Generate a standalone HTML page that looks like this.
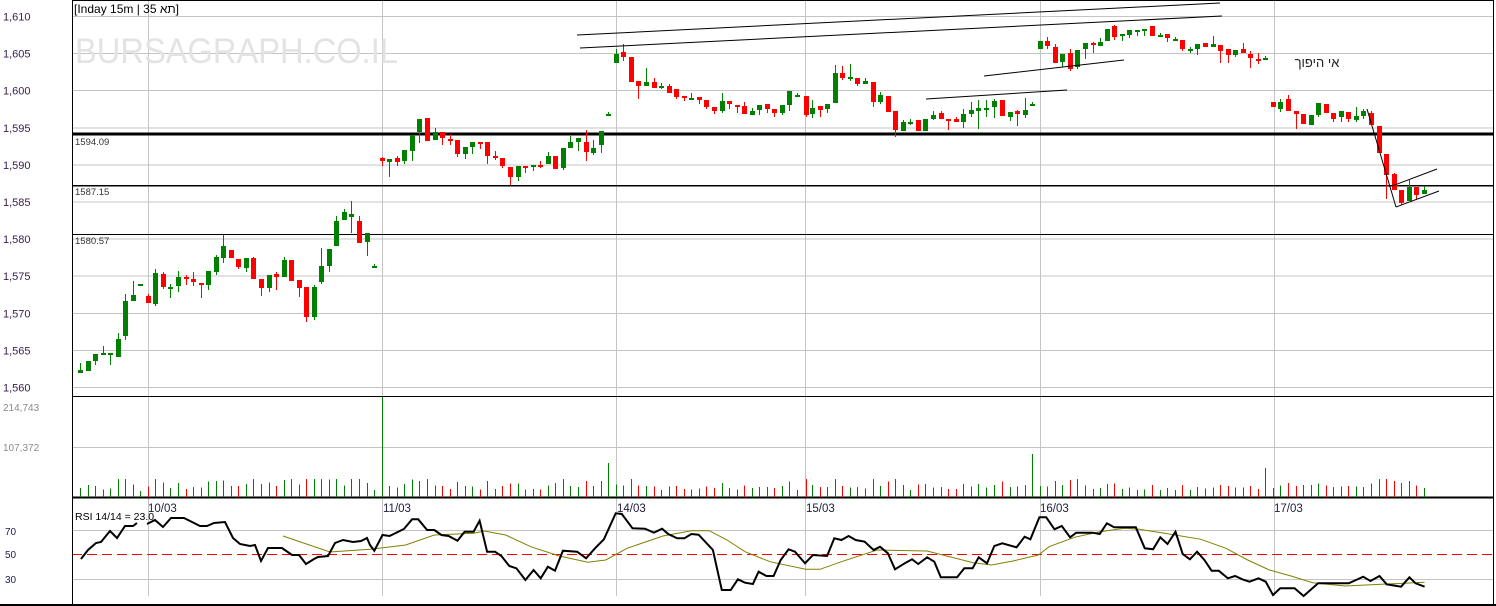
<!DOCTYPE html>
<html><head><meta charset="utf-8">
<style>
html,body{margin:0;padding:0;background:#fff;}
body{width:1496px;height:606px;overflow:hidden;}
svg{display:block;font-family:"Liberation Sans","Noto Sans CJK JP",sans-serif;}
</style></head>
<body>
<svg id="c" width="1496" height="606" xmlns="http://www.w3.org/2000/svg">
<rect width="1496" height="606" fill="#fff"/>
<g id="grid" stroke="#c4c4c4" stroke-width="1" shape-rendering="crispEdges"></g>
<text x="75" y="63" font-size="35" fill="#e3e3e3" textLength="323" lengthAdjust="spacingAndGlyphs">BURSAGRAPH.CO.IL</text>
<g id="lines" shape-rendering="crispEdges"></g>
<g id="candles" shape-rendering="crispEdges"></g>
<g id="vol" shape-rendering="crispEdges"></g>
<g id="trend" stroke="#000" stroke-width="1" fill="none"></g>
<g id="rsi" fill="none"></g>
<g id="labels" font-size="11"></g>
<text x="74" y="13" font-size="12" fill="#000" direction="ltr">[Inday 15m | 35 תא]</text>
<text x="1317" y="67" font-size="13" fill="#222" text-anchor="middle" direction="rtl">אי היפוך</text>
<text x="75" y="520" font-size="10.5" fill="#000">RSI 14/14 = 23.0</text>
</svg>
<script>
var NS="http://www.w3.org/2000/svg";
function el(p,t,a){var e=document.createElementNS(NS,t);for(var k in a)e.setAttribute(k,a[k]);p.appendChild(e);return e;}
var G=document.getElementById('grid'),L=document.getElementById('lines'),C=document.getElementById('candles'),V=document.getElementById('vol'),T=document.getElementById('trend'),R=document.getElementById('rsi'),LB=document.getElementById('labels');
var prices=["1,610","1,605","1,600","1,595","1,590","1,585","1,580","1,575","1,570","1,565","1,560"];
for(var i=0;i<11;i++){var y=16.5+i*37.1;el(G,'line',{x1:72,x2:1494,y1:y,y2:y});
 var t=el(LB,'text',{x:3,y:y+4,fill:'#3a2050'});t.textContent=prices[i];}
[148,382,616,805,1040,1274].forEach(function(x){el(G,'line',{x1:x+.5,x2:x+.5,y1:0,y2:596});});
el(G,'line',{x1:72,x2:1494,y1:447.5,y2:447.5});
el(G,'line',{x1:72,x2:1494,y1:530.5,y2:530.5});el(G,'line',{x1:72,x2:1494,y1:579.5,y2:579.5});
el(L,'line',{x1:72,x2:1494,y1:554.5,y2:554.5,stroke:'#ff0000','stroke-width':1.3,'stroke-dasharray':'10,5'});
el(L,'rect',{x:72.5,y:0.5,width:1421,height:604,fill:'none',stroke:'#000','stroke-width':1});
el(L,'line',{x1:0,x2:1496,y1:605,y2:605,stroke:'#000','stroke-width':2});
el(L,'line',{x1:72,x2:1494,y1:396.5,y2:396.5,stroke:'#000'});
el(L,'line',{x1:72,x2:1494,y1:497.5,y2:497.5,stroke:'#000','stroke-width':2});
el(L,'line',{x1:72,x2:1494,y1:134,y2:134,stroke:'#000','stroke-width':3});
el(L,'line',{x1:72,x2:1494,y1:185.5,y2:185.5,stroke:'#000','stroke-width':1.5});
el(L,'line',{x1:72,x2:1494,y1:234.5,y2:234.5,stroke:'#000','stroke-width':1});
[["1594.09",145],["1587.15",195],["1580.57",244]].forEach(function(a){var t=el(LB,'text',{x:75,y:a[1],fill:'#333','font-size':9.5});t.textContent=a[0];});
[["214,743",411],["107,372",451]].forEach(function(a){var t=el(LB,'text',{x:3,y:a[1],fill:'#8a8a8a','font-size':10});t.textContent=a[0];});
[["70",535],["50",558],["30",583]].forEach(function(a){var t=el(LB,'text',{x:5,y:a[1],fill:'#202050','font-size':10});t.textContent=a[0];});
[["10/03",148],["11/03",383],["14/03",617],["15/03",806],["16/03",1040],["17/03",1274]].forEach(function(a){var t=el(LB,'text',{x:a[1],y:512,fill:'#202040','font-size':11.5});t.textContent=a[0];});
var d1=[[370,373,363,373,'g'],[361,371,361,371,'g'],[354,361,354,365,'g'],[353,353,346,353,'g'],[353,353,353,365,'g'],[339,357,333,357,'g'],[301,336,294,340,'g'],[295,301,281,301,'g'],[284,284,284,284,'g'],[296,303,294,303,'r'],[273,304,269,306,'g'],[274,287,272,289,'r'],[287,287,284,298,'g'],[277,286,271,292,'g'],[277,277,275,285,'r'],[279,282,272,286,'r'],[283,284,283,298,'r'],[271,285,271,290,'g'],[257,272,255,275,'g'],[246,258,235,263,'g'],[250,258,250,258,'r'],[259,267,259,269,'r'],[258,268,258,272,'g'],[258,279,257,279,'r'],[279,288,279,296,'r'],[275,288,275,292,'g'],[274,277,272,290,'r'],[260,277,257,277,'g'],[260,281,260,281,'r'],[280,288,280,297,'r'],[287,317,287,322,'r'],[287,317,285,320,'g'],[266,282,248,284,'g'],[249,266,249,272,'g'],[221,246,216,246,'g'],[212,220,209,220,'g'],[214,217,201,233,'g'],[221,243,216,243,'r'],[233,242,233,256,'g'],[266,266,264,268,'g']];
var cs=[];
d1.forEach(function(c,i){cs.push([80+i*7.54].concat(c));});
var rest=[
[382,158,161,157,166,'r'],[389,159,162,159,177,'g'],[397,158,162,156,166,'r'],[404,150,161,150,164,'g'],[412,135,151,135,161,'g'],[419,119,132,119,143,'g'],[427,118,141,118,141,'r'],[435,132,140,128,140,'g'],[442,132,138,132,145,'r'],[450,139,139,134,145,'r'],[457,140,154,140,157,'r'],[465,147,154,147,159,'g'],[472,142,147,142,154,'g'],[480,142,142,142,149,'r'],[487,142,156,142,164,'r'],[495,156,156,151,160,'r'],[502,158,166,158,168,'r'],[510,167,177,167,185,'r'],[518,166,177,166,181,'g'],[525,166,166,166,173,'r'],[533,165,167,165,171,'g'],[540,165,165,161,168,'r'],[548,156,164,152,164,'g'],[555,156,169,156,169,'r'],[563,148,168,148,170,'g'],[570,142,148,136,148,'g'],[578,138,142,138,151,'g'],[586,142,152,130,161,'r'],[593,148,153,140,155,'g'],[601,131,145,131,153,'g'],[608,114,114,112,116,'g'],
[616,54,63,49,63,'g'],[623,52,57,44,61,'r'],[631,57,82,57,82,'r'],[638,81,86,81,99,'r'],[646,82,86,68,86,'g'],[654,82,88,78,88,'r'],[661,86,86,83,89,'g'],[669,86,93,84,93,'r'],[676,89,97,89,99,'r'],[684,96,98,96,101,'r'],[691,98,98,93,100,'g'],[699,97,100,97,104,'r'],[706,100,107,100,109,'r'],[714,107,111,107,114,'r'],[722,101,111,93,113,'g'],[729,101,104,101,109,'r'],[737,105,105,105,113,'r'],[744,106,114,102,114,'r'],[752,111,115,108,115,'g'],[759,105,110,105,115,'g'],[767,104,109,104,113,'r'],[774,109,113,109,117,'r'],[782,105,113,105,115,'g'],[789,91,105,91,111,'g'],[797,95,95,93,97,'g'],[806,96,115,96,117,'r'],[812,108,114,100,118,'g'],[820,106,110,106,117,'r'],[827,104,109,104,113,'g'],[835,73,103,65,103,'g'],[842,73,78,66,80,'r'],[850,77,77,64,81,'g'],[857,78,84,78,86,'r'],[865,81,84,78,84,'g'],[873,82,102,82,107,'r'],[880,95,102,92,104,'g'],[888,96,112,96,112,'r'],[895,111,130,111,137,'r'],[903,122,131,120,131,'g'],[910,122,122,119,125,'g'],[918,120,131,120,131,'r'],[925,119,131,119,131,'g'],[933,115,119,111,120,'g'],[941,113,119,111,119,'r'],[948,119,119,119,130,'r'],[956,119,122,117,122,'r'],[963,114,122,109,128,'g'],[971,110,114,102,117,'g'],[978,108,111,100,129,'g'],[986,108,108,100,117,'g'],[994,101,107,99,118,'g'],[1002,100,116,100,116,'r'],[1010,112,117,112,121,'g'],[1017,111,114,110,126,'r'],[1025,110,115,98,118,'g'],[1032,104,104,102,106,'g'],
[1040,41,49,41,49,'g'],[1047,41,46,37,49,'r'],[1055,47,63,44,63,'r'],[1062,54,62,54,67,'g'],[1070,53,69,49,71,'r'],[1077,50,67,50,69,'g'],[1085,43,49,43,59,'g'],[1093,43,43,42,53,'r'],[1100,42,46,38,46,'g'],[1107,29,41,29,41,'g'],[1114,26,37,25,40,'r'],[1122,34,36,34,41,'g'],[1129,30,35,30,38,'g'],[1137,30,30,30,36,'g'],[1144,29,29,29,36,'g'],[1152,26,36,26,36,'r'],[1160,35,35,33,37,'g'],[1167,34,38,34,42,'r'],[1175,39,39,37,41,'g'],[1182,40,49,40,51,'r'],[1190,49,49,47,53,'g'],[1197,44,49,44,55,'g'],[1205,43,47,43,47,'r'],[1213,44,47,36,47,'g'],[1220,45,51,45,63,'r'],[1228,49,55,49,63,'r'],[1235,50,55,50,57,'g'],[1243,49,53,43,53,'r'],[1250,54,58,51,68,'r'],[1258,59,59,53,64,'r'],[1265,58,58,56,60,'g'],
[1273,102,107,102,107,'r'],[1280,102,109,99,112,'g'],[1288,99,111,95,111,'r'],[1296,111,114,111,129,'r'],[1303,114,124,114,124,'r'],[1311,115,125,115,125,'g'],[1318,103,115,103,117,'g'],[1326,104,113,104,113,'r'],[1333,113,119,113,122,'r'],[1341,111,117,111,122,'g'],[1348,112,119,112,122,'r'],[1356,116,120,107,122,'g'],[1363,111,116,109,119,'g'],[1371,113,125,111,125,'r'],[1379,126,153,126,153,'r'],[1386,154,175,154,199,'r'],[1394,174,190,173,190,'r'],[1401,190,203,190,205,'r'],[1409,187,201,180,201,'g'],[1416,187,195,187,199,'r'],[1424,190,194,186,194,'g']];
cs=cs.concat(rest);
var COL={g:'#008000',r:'#ff0000'};
var ov={375:[33,'r'],382:[100,'g'],608:[34,'g'],1031:[43,'g'],1032:[43,'g'],1266:[29,'g'],1265:[29,'g'],343:[20,'g'],351:[18,'g'],987:[22,'g'],1077:[18,'g'],1402:[13,'r']};
cs.forEach(function(c){var x=Math.round(c[0]),col=COL[c[5]];
 el(C,'rect',{x:x,y:c[3],width:1,height:Math.max(1,c[4]-c[3]),fill:col});
 if(c[2]-c[1]<2){el(C,'rect',{x:x-2,y:c[1],width:5,height:2,fill:col});}
 else el(C,'rect',{x:x-2,y:c[1],width:5,height:c[2]-c[1],fill:col});
 var h=6+(c[2]-c[1])*0.4+(c[4]-c[3])*0.2;h=Math.min(h,18);
 var vc=col;
 if(ov[x]){h=ov[x][0];vc=COL[ov[x][1]];}
 el(V,'rect',{x:x,y:497-h,width:1,height:h,fill:vc});
});
[[577,35,1220,3],[580,48,1222,16],[984,76,1124,60],[926,99,1067,90],[1367,109,1396,207],[1396,207,1439,191],[1392,186,1437,169]].forEach(function(a){el(T,'line',{x1:a[0],y1:a[1],x2:a[2],y2:a[3]});});
var r1=[[81,559],[88,550],[96,543],[101,542],[110,531],[117,538],[125,526],[133,526],[137,523]];
var r2=[[147,524],[155,520],[163,527],[171,518],[184,518],[200,526],[207,526],[214,523],[225,522],[233,538],[240,544],[250,546],[255,545],[261,561],[268,548],[282,548],[292,555],[299,555],[306,564],[314,559],[318,557],[328,556],[335,543],[343,540],[353,542],[361,541],[367,538]];
var z7=[[0,285],[12,302],[35,255],[55,258],[95,237],[118,208],[135,208],[160,240],[180,240],[200,255],[220,258],[245,272],[265,245],[290,245],[307,212],[328,305],[350,305],[368,318],[390,348],[410,355],[435,390],[458,360],[478,385],[498,350],[518,362],[540,302],[580,305],[605,325],[630,295],[655,268],[688,190],[705,192],[735,235],[770,236],[795,248],[818,236],[835,252],[860,265],[880,265],[900,252],[920,254],[960,300],[985,420],[1010,420],[1030,388],[1050,398],[1072,402],[1088,365],[1110,378],[1130,378],[1150,330],[1172,298],[1190,305],[1218,340],[1240,315],[1280,318],[1300,265],[1320,270],[1340,258],[1360,270],[1385,275],[1410,300],[1428,290],[1450,310],[1470,358],[1500,338],[1518,328],[1535,342],[1560,322]];
var z8=[[12,335],[30,382],[75,382],[95,355],[118,355],[135,322],[158,340],[178,288],[200,280],[240,292],[262,260],[278,268],[303,202],[322,202],[345,238],[365,228],[388,262],[405,248],[450,248],[470,252],[490,220],[510,232],[570,232],[595,295],[618,298],[638,262],[658,282],[680,245],[700,312],[720,328],[740,305],[760,330],[780,362],[800,362],[825,385],[845,378],[865,388],[885,395],[910,385],[930,395],[950,435],[970,415],[1010,415],[1035,438],[1075,400],[1160,400],[1200,380],[1220,393],[1245,378],[1265,403],[1305,410],[1328,382],[1345,400],[1370,410]];
function tr(a,x0,sx){return a.map(function(p){return [x0+p[0]/sx,450+p[1]/3];});}
var s7=[[0,298],[100,285],[180,255],[290,250],[320,243],[380,255],[450,290],[530,318],[610,337],[660,330],[720,295],[820,258],[900,242],[950,242],[1000,270],[1050,305],[1120,335],[1220,358],[1260,358],[1320,335],[1420,300],[1560,303]];
var s8=[[120,338],[170,345],[230,333],[300,315],[330,290],[400,262],[470,245],[540,235],[580,238],[650,250],[750,268],[820,295],[880,330],[940,360],[1000,378],[1060,398],[1150,408],[1250,403],[1370,397]];
var sig=[[283,536],[330,552]].concat(tr(s7,370,2.8),tr(s8,930,2.77));
function pts(a){return a.map(function(p){return p[0].toFixed(1)+','+p[1].toFixed(1);}).join(' ');}
el(R,'polyline',{points:pts(sig),stroke:'#808000','stroke-width':1});
el(R,'polyline',{points:pts(r1),stroke:'#000','stroke-width':2});
var main=r2.concat(tr(z7,370,2.8),tr(z8,930,2.77));
el(R,'polyline',{points:pts(main),stroke:'#000','stroke-width':2,'stroke-linejoin':'miter'});
</script>
</body></html>
